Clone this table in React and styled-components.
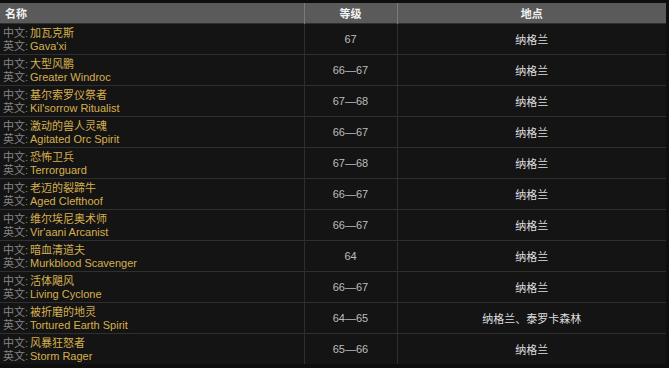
import React from 'react';
import styled, { createGlobalStyle } from 'styled-components';

const GlobalStyle = createGlobalStyle`
  html, body {
    margin: 0;
    padding: 0;
    background: #0e0e0e;
  }
  body {
    font-family: "Liberation Sans", "Noto Sans CJK SC", sans-serif;
    font-size: 11px;
  }
`;

const Page = styled.div`
  padding-top: 3px;
  width: 666px;
  height: 365px;
  overflow: hidden;
`;

const Table = styled.table`
  width: 666px;
  border-collapse: collapse;
  table-layout: fixed;
  background: #141414;
`;

const HeadCell = styled.th`
  height: 20px;
  padding: 0 5px;
  background: #5a5a5a;
  color: #f2f2f2;
  font-weight: bold;
  font-size: 11px;
  text-align: ${p => (p.$left ? 'left' : 'center')};
  border-left: 1px solid #7a7a7a;
  &:first-child {
    border-left: none;
  }
`;

const Row = styled.tr`
  border-top: 1px solid #2f2f2f;
`;

const Cell = styled.td`
  height: 30px;
  padding: 0;
  border-left: 1px solid #2f2f2f;
  text-align: center;
  color: ${p => p.$color || '#bdbdbd'};
  vertical-align: middle;
  &:first-child {
    border-left: none;
    text-align: left;
    vertical-align: top;
    padding: 3px 0 0 3px;
    height: 27px;
  }
`;

const Line = styled.div`
  display: flex;
  line-height: 13px;
  white-space: nowrap;
`;

const Label = styled.span`
  display: inline-block;
  width: 27px;
  color: #858585;
`;

const Name = styled.span`
  color: #d6b04e;
`;

const rows = [
  ['加瓦克斯', "Gava'xi", '67', '纳格兰'],
  ['大型风鹏', 'Greater Windroc', '66—67', '纳格兰'],
  ['基尔索罗仪祭者', "Kil'sorrow Ritualist", '67—68', '纳格兰'],
  ['激动的兽人灵魂', 'Agitated Orc Spirit', '66—67', '纳格兰'],
  ['恐怖卫兵', 'Terrorguard', '67—68', '纳格兰'],
  ['老迈的裂蹄牛', 'Aged Clefthoof', '66—67', '纳格兰'],
  ['维尔埃尼奥术师', "Vir'aani Arcanist", '66—67', '纳格兰'],
  ['暗血清道夫', 'Murkblood Scavenger', '64', '纳格兰'],
  ['活体飓风', 'Living Cyclone', '66—67', '纳格兰'],
  ['被折磨的地灵', 'Tortured Earth Spirit', '64—65', '纳格兰、泰罗卡森林'],
  ['风暴狂怒者', 'Storm Rager', '65—66', '纳格兰'],
];

export default function App() {
  return (
    <Page>
      <GlobalStyle />
      <Table>
        <colgroup>
          <col style={{ width: 304 }} />
          <col style={{ width: 93 }} />
          <col />
        </colgroup>
        <thead>
          <tr>
            <HeadCell $left>名称</HeadCell>
            <HeadCell>等级</HeadCell>
            <HeadCell>地点</HeadCell>
          </tr>
        </thead>
        <tbody>
          {rows.map(([cn, en, level, place]) => (
            <Row key={en}>
              <Cell>
                <Line><Label>中文:</Label><Name>{cn}</Name></Line>
                <Line><Label>英文:</Label><Name>{en}</Name></Line>
              </Cell>
              <Cell>{level}</Cell>
              <Cell $color="#dedede">{place}</Cell>
            </Row>
          ))}
        </tbody>
      </Table>
    </Page>
  );
}
